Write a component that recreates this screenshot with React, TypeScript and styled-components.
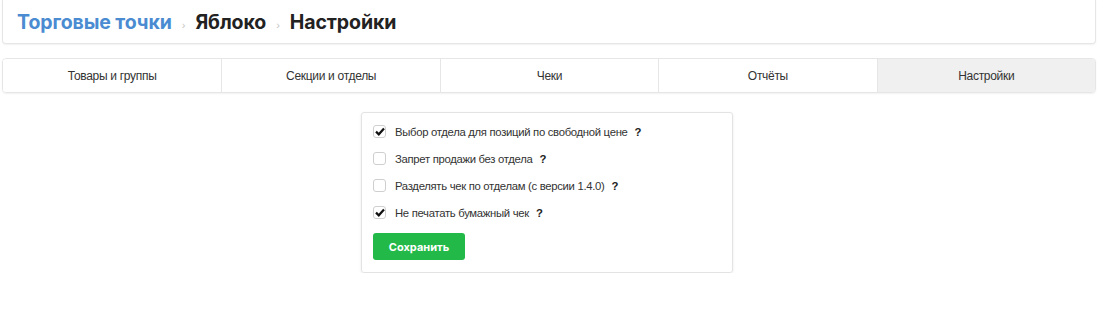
import React from 'react';
import styled, { createGlobalStyle } from 'styled-components';

const GlobalStyle = createGlobalStyle`
    body {
        margin: 0;
        background: #ffffff;
        font-family: "Liberation Sans", Arial, sans-serif;
        color: #333333;
    }
`;

const Page = styled.div`
    padding: 0 3px 0 2px;
`;

const Header = styled.div`
    height: 44px;
    box-sizing: border-box;
    display: flex;
    align-items: center;
    padding: 1px 14px 0;
    border: 1px solid #e6e6e6;
    border-top: none;
    border-radius: 0 0 4px 4px;
    box-shadow: 0 1px 2px rgba(0, 0, 0, 0.06);
`;

const Crumb = styled.span<{ link?: boolean }>`
    font-family: Inter, "Noto Sans", sans-serif;
    font-weight: 700;
    font-size: 19.5px;
    letter-spacing: -0.1px;
    color: ${(p) => (p.link ? '#4a8bd1' : '#222222')};
`;

const Sep = styled.span`
    font-family: "Liberation Sans", sans-serif;
    font-size: 11px;
    color: #c4c4c4;
    margin: 5px 10px 0;
`;

const Tabs = styled.div`
    margin-top: 14px;
    height: 35px;
    box-sizing: border-box;
    display: grid;
    grid-template-columns: repeat(5, 1fr);
    border: 1px solid #e6e6e6;
    border-radius: 4px;
    overflow: hidden;
    box-shadow: 0 1px 2px rgba(0, 0, 0, 0.06);
`;

const Tab = styled.div<{ active?: boolean }>`
    display: flex;
    align-items: center;
    justify-content: center;
    font-size: 12px;
    letter-spacing: -0.3px;
    color: #333333;
    background: ${(p) => (p.active ? '#f0f0f0' : '#ffffff')};
    border-left: 1px solid #e6e6e6;
    &:first-child {
        border-left: none;
    }
`;

const Panel = styled.div`
    width: 372px;
    box-sizing: border-box;
    margin: 19px 0 0 calc(50% - 188px);
    padding: 5px 11px 12px;
    border: 1px solid #e3e3e3;
    border-radius: 3px;
    box-shadow: 0 1px 3px rgba(0, 0, 0, 0.08);
`;

const Row = styled.label`
    height: 27px;
    display: flex;
    align-items: center;
    font-size: 11.3px;
    letter-spacing: -0.3px;
    color: #333333;
`;

const Box = styled.span`
    width: 13px;
    height: 13px;
    box-sizing: border-box;
    border: 1px solid #cfcfcf;
    border-radius: 3px;
    display: flex;
    align-items: center;
    justify-content: center;
    margin-right: 9px;
    background: #fff;
`;

const Help = styled.span`
    font-weight: 700;
    color: #222;
    margin-left: 7px;
`;

const SaveButton = styled.button`
    margin-top: 7px;
    width: 92px;
    height: 27px;
    border: none;
    border-radius: 3px;
    background: #22b948;
    color: #ffffff;
    font-family: Inter, "Noto Sans", sans-serif;
    font-weight: 700;
    font-size: 11px;
`;

const Check = () => (
    <svg width="10" height="9" viewBox="0 0 10 9">
        <path d="M1 4.6 L3.8 7.3 L9 1.6" fill="none" stroke="#111" strokeWidth="2.2" />
    </svg>
);

const options = [
    { label: 'Выбор отдела для позиций по свободной цене', checked: true },
    { label: 'Запрет продажи без отдела', checked: false },
    { label: 'Разделять чек по отделам (с версии 1.4.0)', checked: false },
    { label: 'Не печатать бумажный чек', checked: true },
];

const tabs = ['Товары и группы', 'Секции и отделы', 'Чеки', 'Отчёты', 'Настройки'];

const App: React.FC = () => {
    return (
        <Page>
            <GlobalStyle />
            <Header>
                <Crumb link>Торговые точки</Crumb>
                <Sep>›</Sep>
                <Crumb>Яблоко</Crumb>
                <Sep>›</Sep>
                <Crumb>Настройки</Crumb>
            </Header>
            <Tabs>
                {tabs.map((t) => (
                    <Tab key={t} active={t === 'Настройки'}>{t}</Tab>
                ))}
            </Tabs>
            <Panel>
                {options.map((o) => (
                    <Row key={o.label}>
                        <Box>{o.checked && <Check />}</Box>
                        {o.label}
                        <Help>?</Help>
                    </Row>
                ))}
                <SaveButton>Сохранить</SaveButton>
            </Panel>
        </Page>
    );
};

export default App;
